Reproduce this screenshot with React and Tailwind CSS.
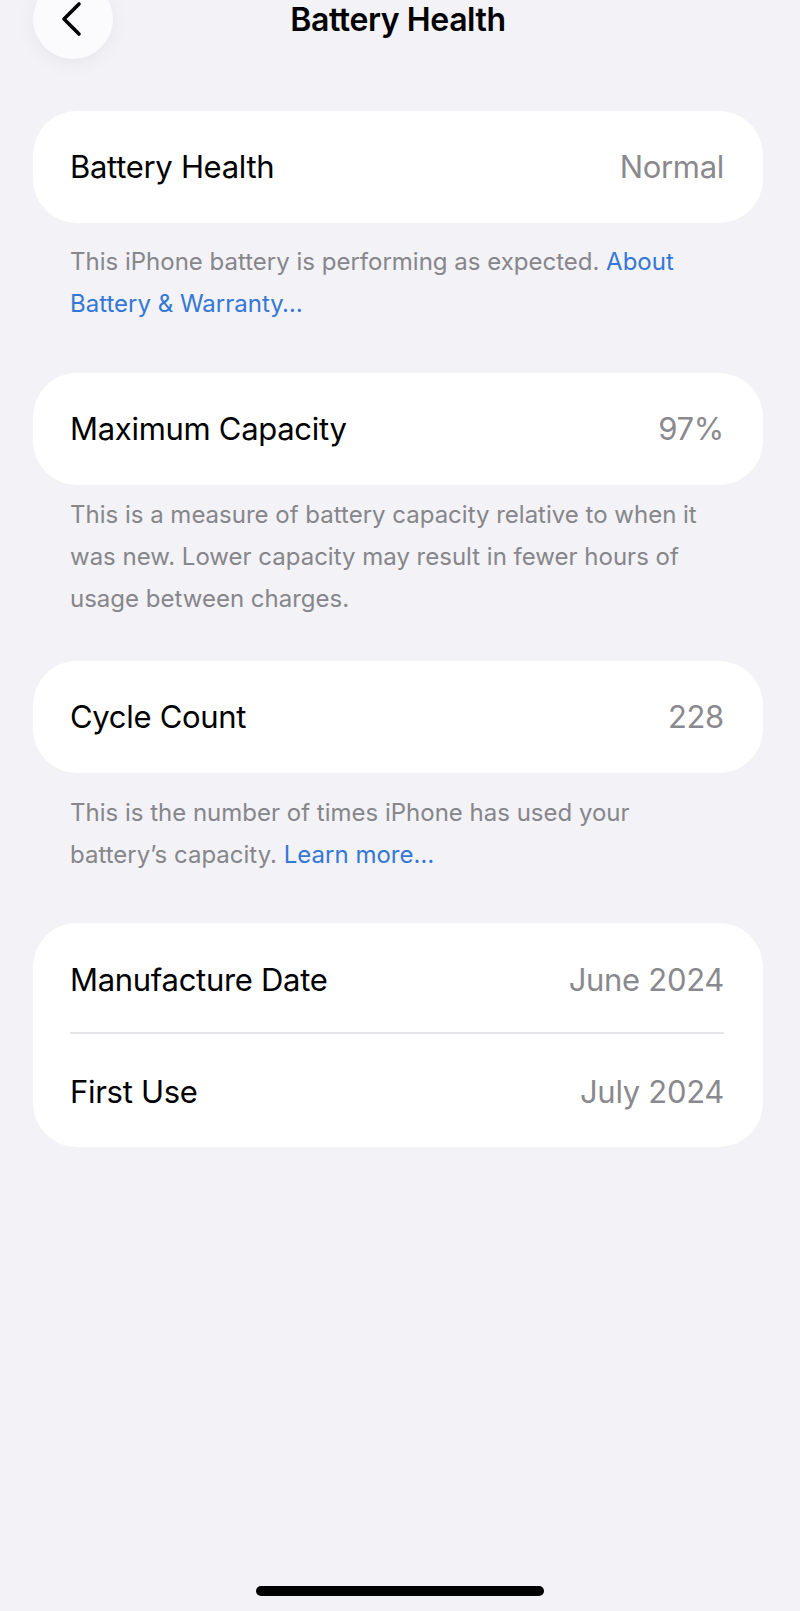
// Battery Health settings screen
const font = { fontFamily: "Inter, 'Noto Sans', sans-serif" };

function Row({ label, value, className = "h-[112px]" }) {
  return (
    <div className={`flex items-center justify-between pl-[37px] pr-[39px] ${className}`}>
      <span className="text-[31px] text-black tracking-[-0.3px]">{label}</span>
      <span className="text-[31px] text-[#8a8a8e] tracking-[-0.3px]">{value}</span>
    </div>
  );
}

function Card({ children, className = "" }) {
  return <div className={`rounded-[44px] bg-white ${className}`}>{children}</div>;
}

function Footer({ children, className = "" }) {
  return (
    <p className={`pl-[37px] pr-[45px] text-[24px] leading-[42px] text-[#86868b] ${className}`}>
      {children}
    </p>
  );
}

export default function App() {
  return (
    <div className="min-h-[1611px] flex flex-col bg-[#f2f2f7] overflow-hidden" style={font}>
      {/* Nav bar */}
      <header className="flex items-start h-[111px] pl-[33px] pr-[37px]">
        <button className="-mt-[21px] flex h-[80px] w-[80px] shrink-0 items-end justify-center rounded-full bg-[#fbfbfd] pb-[22px] shadow-[0_4px_20px_rgba(0,0,0,0.05)]">
          <svg width="24" height="36" viewBox="0 0 24 36" fill="none" className="-ml-[3px]">
            <path d="M19 3 L4 18 L19 33" stroke="#000" strokeWidth="3.6" strokeLinecap="round" strokeLinejoin="round" />
          </svg>
        </button>
        <h1 className="flex-1 text-center text-[32px] font-semibold leading-[40px] text-black tracking-[-0.4px]">
          Battery Health
        </h1>
        <div className="w-[80px] shrink-0" />
      </header>

      <main className="pl-[33px] pr-[37px]">
        <Card>
          <Row label="Battery Health" value="Normal" />
        </Card>
        <Footer className="mt-[18px]">
          This iPhone battery is performing as expected.{" "}
          <span className="text-[#3577d4]">About Battery &amp; Warranty…</span>
        </Footer>

        <Card className="mt-[48px]">
          <Row label="Maximum Capacity" value="97%" />
        </Card>
        <Footer className="mt-[9px]">
          This is a measure of battery capacity relative to when it was new. Lower capacity may
          result in fewer hours of usage between charges.
        </Footer>

        <Card className="mt-[41px]">
          <Row label="Cycle Count" value="228" />
        </Card>
        <Footer className="mt-[19px]">
          This is the number of times iPhone has used your battery’s capacity.{" "}
          <span className="text-[#3577d4]">Learn more…</span>
        </Footer>

        <Card className="mt-[47px]">
          <Row label="Manufacture Date" value="June 2024" className="h-[109px] pt-[5px]" />
          <div className="ml-[37px] mr-[39px] h-[2px] bg-[#e5e5ea]" />
          <Row label="First Use" value="July 2024" className="h-[113px] pt-[4px]" />
        </Card>
      </main>

      {/* Home indicator */}
      <div className="mt-auto flex justify-center pb-[15px]">
        <div className="h-[10px] w-[288px] rounded-full bg-black" />
      </div>
    </div>
  );
}
